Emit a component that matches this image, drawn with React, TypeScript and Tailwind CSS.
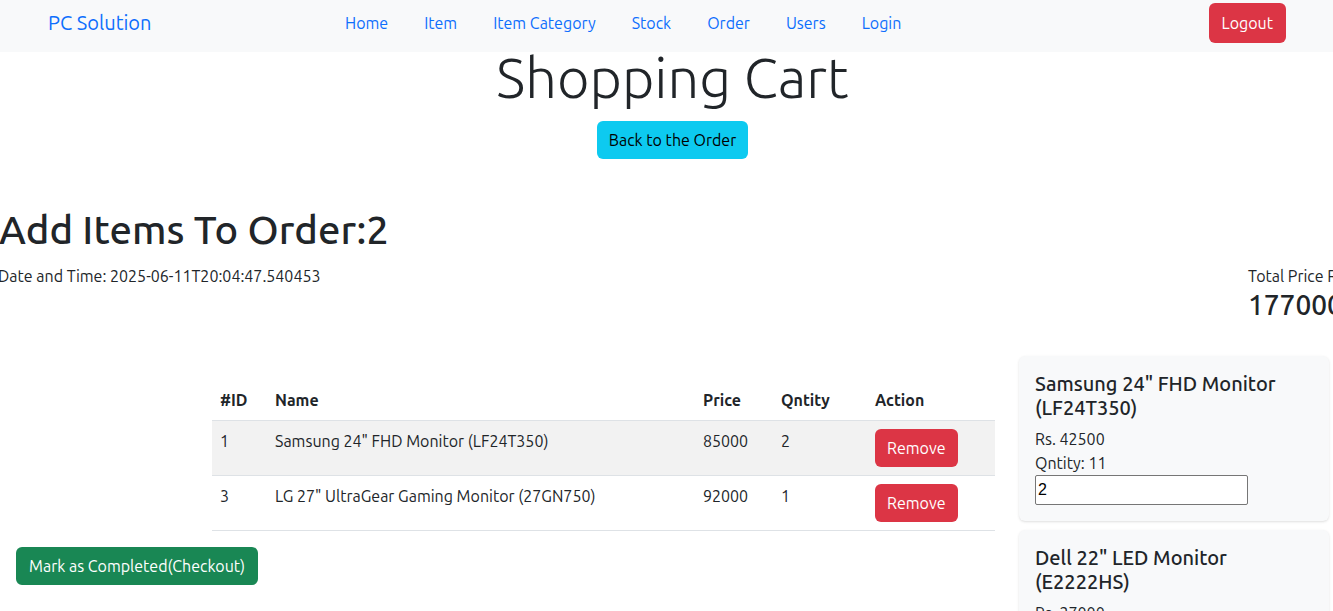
import React from "react";

const links = ["Home", "Item", "Item Category", "Stock", "Order", "Users", "Login"];

const rows = [
  { id: 1, name: 'Samsung 24" FHD Monitor (LF24T350)', price: 85000, qty: 2 },
  { id: 3, name: 'LG 27" UltraGear Gaming Monitor (27GN750)', price: 92000, qty: 1 },
];

const cards = [
  { name: 'Samsung 24" FHD Monitor (LF24T350)', price: 42500, qty: 11, value: "2" },
  { name: 'Dell 22" LED Monitor (E2222HS)', price: 27000, qty: 8, value: "" },
];

function Navbar() {
  return (
    <nav className="h-[52px] bg-[#f8f9fa] flex items-center pb-[6px]">
      <a className="ml-[48px] w-[279px] text-[20px] text-[#0d6efd]">PC Solution</a>
      <ul className="flex items-center">
        {links.map((l) => (
          <li key={l} className="px-[18px] text-[16px] text-[#0d6efd]">
            {l}
          </li>
        ))}
      </ul>
      <div className="flex-1" />
      <button className="mr-[47px] h-[40px] px-[13px] rounded-[6px] bg-[#dc3545] text-white text-[16px]">
        Logout
      </button>
    </nav>
  );
}

export default function App() {
  return (
    <div
      className="w-[1333px] h-[611px] overflow-hidden bg-white text-[#212529]"
      style={{ fontFamily: 'Ubuntu, "Noto Sans", sans-serif' }}
    >
      <Navbar />

      <div className="flex flex-col items-center pl-[12px]">
        <h1 className="text-[56px] font-light leading-[1.2] -mt-[8px]">Shopping Cart</h1>
        <button className="mt-[10px] h-[38px] px-[12px] rounded-[6px] bg-[#0dcaf0] text-black text-[16px]">
          Back to the Order
        </button>
      </div>

      <h2 className="mt-[47px] -ml-[1px] text-[40px] leading-[1.2] font-medium">Add Items To Order:2</h2>

      <div className="flex mt-[10px]">
        <p className="flex-1 -ml-[2px] text-[16px] leading-[24px]">Date and Time: 2025-06-11T20:04:47.540453</p>
        <div className="w-[85px] shrink-0 whitespace-nowrap">
          <p className="text-[16px] leading-[24px]">Total Price Rs.</p>
          <p className="text-[28px] leading-[34px] font-medium">177000</p>
        </div>
      </div>

      <div className="flex mt-[34px]">
        <div className="w-[1003px] shrink-0">
          <div className="pl-[212px] pr-[8px] pt-[24px]">
            <table className="w-full text-[16px] text-left border-collapse">
              <thead>
                <tr className="border-b border-[#dee2e6]">
                  <th className="px-[8px] py-[8px] w-[55px] font-bold">#ID</th>
                  <th className="px-[8px] py-[8px] font-bold">Name</th>
                  <th className="px-[8px] py-[8px] w-[78px] font-bold">Price</th>
                  <th className="px-[8px] py-[8px] w-[94px] font-bold">Qntity</th>
                  <th className="px-[8px] py-[8px] w-[128px] font-bold">Action</th>
                </tr>
              </thead>
              <tbody>
                {rows.map((r, i) => (
                  <tr
                    key={r.id}
                    className={`border-b border-[#dee2e6] align-top ${i === 0 ? "bg-[#f2f2f2]" : "bg-white"}`}
                  >
                    <td className="px-[8px] py-[8px] leading-[24px]">{r.id}</td>
                    <td className="px-[8px] py-[8px] leading-[24px]">{r.name}</td>
                    <td className="px-[8px] py-[8px] leading-[24px]">{r.price}</td>
                    <td className="px-[8px] py-[8px] leading-[24px]">{r.qty}</td>
                    <td className="px-[8px] py-[8px]">
                      <button className="h-[38px] px-[12px] rounded-[6px] bg-[#dc3545] text-white">
                        Remove
                      </button>
                    </td>
                  </tr>
                ))}
              </tbody>
            </table>
          </div>
          <button className="mt-[16px] ml-[16px] h-[38px] px-[13px] rounded-[6px] bg-[#198754] text-white text-[16px]">
            Mark as Completed(Checkout)
          </button>
        </div>

        <div className="ml-[16px] w-[310px] shrink-0 flex flex-col gap-[9px]">
          {cards.map((c) => (
            <div key={c.name} className="bg-[#f8f9fa] rounded-[6px] shadow-sm p-[16px] pb-[16px]">
              <h5 className="text-[20px] leading-[24px] font-medium pr-[30px]">{c.name}</h5>
              <p className="mt-[7px] text-[16px] leading-[24px]">Rs. {c.price}</p>
              <p className="text-[16px] leading-[24px]">Qntity: {c.qty}</p>
              <input
                defaultValue={c.value}
                className="w-[213px] h-[30px] border border-[#767676] rounded-[2px] bg-white px-[2px] text-[16px] text-black"
                style={{ fontFamily: "Arial, sans-serif" }}
              />
            </div>
          ))}
        </div>
      </div>
    </div>
  );
}
